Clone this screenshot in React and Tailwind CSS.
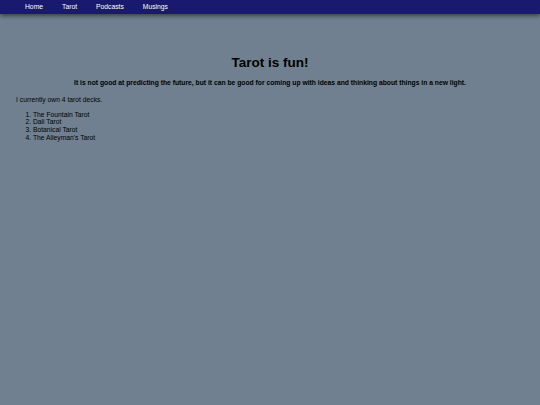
export default function App() {
  const links = ['Home', 'Tarot', 'Podcasts', 'Musings'];
  const decks = ['The Fountain Tarot', 'Dali Tarot', 'Botanical Tarot', "The Alleyman's Tarot"];

  return (
    <div className="min-h-[405px] w-full bg-[#708090] text-black leading-[1.15] font-['Liberation_Sans',Arial,sans-serif]">
      <nav className="h-[14px] bg-[#191970] shadow-[0_2px_4px_rgba(0,0,0,0.5)] flex items-center pl-[15.5px]">
        {links.map((link) => (
          <a key={link} href="#" className="px-[9.5px] text-[6.75px] leading-none text-white">
            {link}
          </a>
        ))}
      </nav>

      <main className="px-[16px] pt-[40.8px]">
        <h1 className="text-center text-[13.5px] font-bold">Tarot is fun!</h1>
        <h4 className="mt-[9px] text-center text-[6.75px] font-bold">
          It is not good at predicting the future, but it can be good for coming up with ideas and thinking about things in a new light.
        </h4>
        <p className="mt-[9px] text-[6.75px]">I currently own 4 tarot decks.</p>
        <ol className="mt-[6.75px] list-decimal pl-[16.9px] text-[6.75px]">
          {decks.map((deck) => (
            <li key={deck}>{deck}</li>
          ))}
        </ol>
      </main>
    </div>
  );
}
